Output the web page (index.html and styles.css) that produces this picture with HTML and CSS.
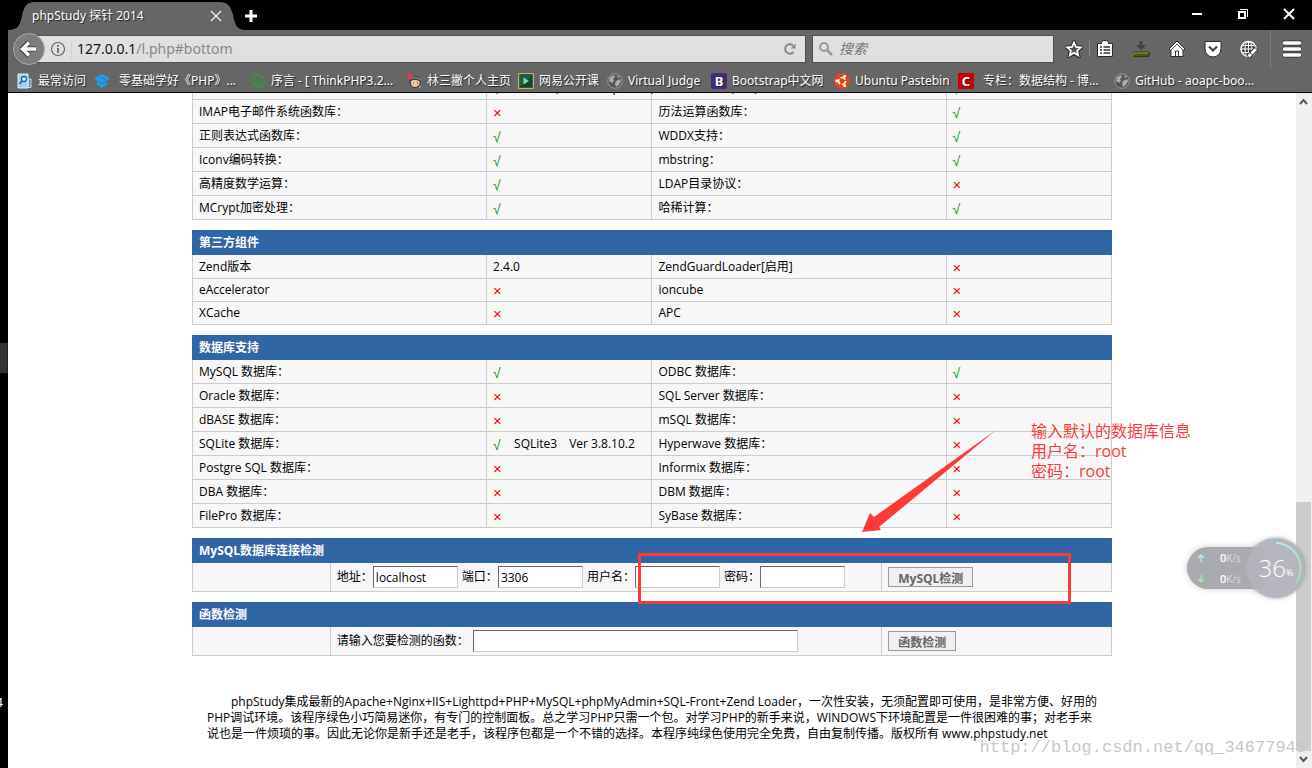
FILE: index.html
```html
<!DOCTYPE html>
<html lang="zh-CN">
<head>
<meta charset="utf-8">
<title>phpStudy 探针 2014</title>
<link rel="stylesheet" href="styles.css">
</head>
<body>
<div class="desktop-edge">
  <span class="edge-handle"></span>
  <span class="edge-text">4</span>
</div>
<div class="browser">
  <header class="chrome">
    <div class="titlebar">
      <div class="tab">
        <svg class="tab-shape" viewBox="0 0 238 30"><path fill="#666" d="M0 30C11 30 12 24 14 16C16 7 18 2 27 2H211C221 2 223 8 225 15C227 24 228 30 238 30Z"/></svg>
        <span class="tab-title">phpStudy 探针 2014</span>
        <button class="plain" aria-label="关闭标签页"><svg width="12" height="12" viewBox="0 0 12 12"><path d="M1 1L11 11M11 1L1 11" stroke="#eee" stroke-width="1.3"/></svg></button>
      </div>
      <button class="plain new-tab" aria-label="新标签页"><svg width="14" height="14" viewBox="0 0 14 14"><path d="M7 1V13M1 7H13" stroke="#fff" stroke-width="3"/></svg></button>
      <div class="window-buttons">
        <button class="plain" aria-label="最小化"><svg width="12" height="12" viewBox="0 0 12 12"><path d="M1 6H11" stroke="#fff" stroke-width="2"/></svg></button>
        <button class="plain" aria-label="还原"><svg width="12" height="12" viewBox="0 0 12 12" fill="none" stroke="#fff"><path d="M2 4H8V10H2Z" stroke-width="2"/><path d="M3 1.500H10.500V9" stroke-width="1"/></svg></button>
        <button class="plain" aria-label="关闭"><svg width="12" height="12" viewBox="0 0 12 12"><path d="M1 1L11 11M11 1L1 11" stroke="#fff" stroke-width="2"/></svg></button>
      </div>
    </div>
    <div class="navbar">
      <button class="back" aria-label="后退"><svg width="18" height="18" viewBox="0 0 18 18"><path d="M9 2L2 9L9 16M3 9H16" fill="none" stroke="#333" stroke-width="5"/><path d="M9 2.500L2.500 9L9 15.500M3 9H16" fill="none" stroke="#fff" stroke-width="3.400"/></svg></button>
      <div class="urlbar">
        <svg width="16" height="16" viewBox="0 0 16 16" fill="none" stroke="#666"><circle cx="8" cy="8" r="6.500" stroke-width="1.200"/><path d="M8 7V12M8 4V5.700" stroke-width="1.800"/></svg>
        <span class="url-rule"></span>
        <span class="url">127.0.0.1<span class="url-path">/l.php#bottom</span></span>
        <button class="plain reload" aria-label="重新载入"><svg width="14" height="14" viewBox="0 0 14 14"><path d="M10.500 10A4.700 4.700 0 1 1 10 3.500" fill="none" stroke="#888" stroke-width="2"/><path d="M7.500 6.500H12.500V1.500Z" fill="#888"/></svg></button>
      </div>
      <div class="searchbar">
        <svg width="16" height="16" viewBox="0 0 16 16" fill="none" stroke="#999"><circle cx="6" cy="6" r="4" stroke-width="2"/><path d="M9 9L14 14" stroke-width="2.600"/></svg>
        <input class="search-input" type="text" placeholder="搜索" aria-label="搜索">
      </div>
      <div class="tools">
        <button class="plain" aria-label="收藏"><svg width="18" height="18" viewBox="0 0 18 18"><path d="M9 2L11.200 6.800L16.300 7.300L12.500 10.800L13.600 16L9 13.300L4.400 16L5.500 10.800L1.700 7.300L6.800 6.800Z" fill="#555" stroke="#2b2b2b" stroke-width="3.600"/><path d="M9 2.500L11 7L15.800 7.500L12.200 10.700L13.200 15.300L9 12.800L4.800 15.300L5.800 10.700L2.200 7.500L7 7Z" fill="#555" stroke="#fff" stroke-width="1.800"/></svg></button>
        <span class="tool-rule"></span>
        <button class="plain" aria-label="书签"><svg width="18" height="18" viewBox="0 0 18 18"><path d="M1.500 3.500H5.500V2L7.500 .5H10.500L12.500 2V3.500H16.500V16.500H1.500Z" fill="#fff" stroke="#2b2b2b"/><path d="M4 7H6M7.500 7H14M4 10H6M7.500 10H14M4 13H6M7.500 13H14" stroke="#333" stroke-width="1.500"/></svg></button>
        <button class="plain" aria-label="下载"><svg width="18" height="18" viewBox="0 0 18 18"><path d="M7.500 1H10.500V5H14L9 10L4 5H7.500Z" fill="#444"/><rect x=".5" y="12" width="17" height="4.500" rx="1.500" fill="#555500" stroke="#333"/><path d="M1 16.500V13H16" fill="none" stroke="#8ca04a"/></svg></button>
        <button class="plain" aria-label="主页"><svg width="18" height="18" viewBox="0 0 18 18"><path d="M9 1L17 9L15.500 10.200H15V16.500H3V10.200H2.500L1 9Z" fill="#fff" stroke="#2b2b2b"/><path d="M3 10L9 4.200L15 10M7.500 16V11H10.500V16" fill="none" stroke="#333"/></svg></button>
        <button class="plain" aria-label="Pocket"><svg width="18" height="18" viewBox="0 0 18 18"><path d="M1 1.500H17V9A8 8 0 0 1 1 9Z" fill="#fff" stroke="#2b2b2b"/><path d="M5 6.500L9 10.500L13 6.500" fill="none" stroke="#444" stroke-width="2.200"/></svg></button>
        <button class="plain" aria-label="附加组件"><svg width="18" height="18" viewBox="0 0 18 18" fill="none"><circle cx="8.500" cy="9" r="7.500" fill="#444" stroke="#fff" stroke-width="1.500"/><ellipse cx="8.500" cy="9" rx="3.500" ry="7.500" stroke="#fff"/><path d="M1 9H16M2.500 5.500H14.500M2.500 12.500H14.500M8.500 1.500V16.500" stroke="#fff"/><path d="M8 17L16.500 8.500" stroke="#333" stroke-width="5"/><path d="M8.500 16.500L11 14M11.500 13.500L16 9" stroke="#fff" stroke-width="3"/></svg></button>
        <span class="menu-rule"></span>
        <button class="plain" aria-label="菜单"><svg width="18" height="18" viewBox="0 0 18 18"><path d="M1 3H17M1 9H17M1 15H17" stroke="#2b2b2b" stroke-width="5" stroke-linecap="round"/><path d="M1.500 3H16.500M1.500 9H16.500M1.500 15H16.500" stroke="#fff" stroke-width="3.400" stroke-linecap="round"/></svg></button>
      </div>
    </div>
    <nav class="bookmarks">
      <a href="#"><svg width="16" height="16" viewBox="0 0 16 16"><path d="M1 1H11V15H1Z" fill="#9fd0ec" stroke="#d7eefa"/><path d="M11.500 6H14V14.500H11.500Z" fill="#4d8fb8" stroke="#bfe0f3"/><circle cx="7" cy="6" r="2.500" fill="#d7eefa" stroke="#2b6288" stroke-width="1.300"/><path d="M5 8L2.500 11" stroke="#2b6288" stroke-width="1.800"/></svg><span>最常访问</span></a>
      <a href="#" class="spaced"><svg width="16" height="16" viewBox="0 0 16 16"><path d="M8 1L16 5.500L13 7.500V11.500L8 15L3 11.500V7.500L0 5.500Z" fill="#15a0f5"/><path d="M6 5.500H10L11 6.500M3.500 8L8 10.500L12.500 8" fill="none" stroke="#56707f" stroke-width="1.200"/></svg><span>零基础学好《PHP》...</span></a>
      <a href="#"><svg width="16" height="16" viewBox="0 0 16 16" fill="none" stroke="#2d9b38" stroke-width="1.500"><path d="M8 11H5A3.500 3.500 0 0 1 4 4.500A4.500 4.500 0 0 1 12.500 5A3 3 0 0 1 12 11H10L7 7.500M1 13.500Q5 11.500 8 13.500Q11 15 15 13"/></svg><span>序言 - [ ThinkPHP3.2...</span></a>
      <a href="#"><svg width="16" height="16" viewBox="0 0 16 16"><circle cx="9" cy="9" r="6" fill="#4a4543"/><path d="M5 8Q9 6 13.500 8.500V11Q12 14 9 14Q5.500 14 5 11Z" fill="#f0c7a5"/><path d="M3 6Q9 3 15 7" stroke="#999" fill="none"/><path d="M7 10H8M11 10H12" stroke="#333"/><path d="M3.500 6.500L.5 3Q0 0 2 .5L3.500 2L5 .5Q8 0 6.500 3Z" fill="#f0324b"/><circle cx="14" cy="14" r="1.200" fill="#5aa9db"/></svg><span>林三撇个人主页</span></a>
      <a href="#"><svg width="16" height="16" viewBox="0 0 16 16"><rect x=".5" y=".5" width="15" height="15" rx="1" fill="#17614a" stroke="#e8a64c" stroke-width="1.200"/><path d="M2 14L14 2V14Z" fill="#0f4436"/><path d="M5.500 4.500V11.500L11 8Z" fill="#8fd3a4"/></svg><span>网易公开课</span></a>
      <a href="#"><svg width="16" height="16" viewBox="0 0 16 16"><circle cx="8" cy="8" r="7.300" fill="#555" stroke="#999"/><path d="M3 4L7 2L8 4L6 6L7 8L5 10L2 8ZM9 8L13 6L14 8L12 12L9 14L8 11ZM10 2L13 4L11 5Z" fill="#aaa"/></svg><span>Virtual Judge</span></a>
      <a href="#"><span class="favicon purple">B</span><span>Bootstrap中文网</span></a>
      <a href="#"><svg width="16" height="16" viewBox="0 0 16 16"><circle cx="8" cy="8" r="8" fill="#dd4814"/><circle cx="8" cy="8" r="3.500" fill="none" stroke="#fff" stroke-width="1.700" stroke-dasharray="5.500 1.800"/><circle cx="2.800" cy="8" r="1.400" fill="#fff"/><circle cx="10.700" cy="3.300" r="1.400" fill="#fff"/><circle cx="10.700" cy="12.700" r="1.400" fill="#fff"/></svg><span>Ubuntu Pastebin</span></a>
      <a href="#" class="spaced"><span class="favicon red">C</span><span>专栏：数据结构 - 博...</span></a>
      <a href="#"><svg width="16" height="16" viewBox="0 0 16 16"><circle cx="8" cy="8" r="7.300" fill="#555" stroke="#999"/><path d="M3 4L7 2L8 4L6 6L7 8L5 10L2 8ZM9 8L13 6L14 8L12 12L9 14L8 11ZM10 2L13 4L11 5Z" fill="#aaa"/></svg><span>GitHub - aoapc-boo...</span></a>
    </nav>
  </header>
  <div class="viewport">
    <main class="page">
      <table class="info cut">
        <colgroup><col class="w32"><col class="w18"><col class="w32"><col class="w18"></colgroup>
        <tr><td>GD库支持：</td><td><span class="yes">√</span> bundled (2.1.0 compatible)</td><td>压缩文件支持(Zlib)：</td><td><span class="yes">√</span></td></tr>
        <tr><td>IMAP电子邮件系统函数库：</td><td><span class="no">×</span></td><td>历法运算函数库：</td><td><span class="yes">√</span></td></tr>
        <tr><td>正则表达式函数库：</td><td><span class="yes">√</span></td><td>WDDX支持：</td><td><span class="yes">√</span></td></tr>
        <tr><td>Iconv编码转换：</td><td><span class="yes">√</span></td><td>mbstring：</td><td><span class="yes">√</span></td></tr>
        <tr><td>高精度数学运算：</td><td><span class="yes">√</span></td><td>LDAP目录协议：</td><td><span class="no">×</span></td></tr>
        <tr><td>MCrypt加密处理：</td><td><span class="yes">√</span></td><td>哈稀计算：</td><td><span class="yes">√</span></td></tr>
      </table>
      <table class="info">
        <colgroup><col class="w32"><col class="w18"><col class="w32"><col class="w18"></colgroup>
        <tr><th colspan="4">第三方组件</th></tr>
        <tr><td>Zend版本</td><td>2.4.0</td><td>ZendGuardLoader[启用]</td><td><span class="no">×</span></td></tr>
        <tr class="short"><td>eAccelerator</td><td><span class="no">×</span></td><td>ioncube</td><td><span class="no">×</span></td></tr>
        <tr class="short"><td>XCache</td><td><span class="no">×</span></td><td>APC</td><td><span class="no">×</span></td></tr>
      </table>
      <table class="info">
        <colgroup><col class="w32"><col class="w18"><col class="w32"><col class="w18"></colgroup>
        <tr><th colspan="4">数据库支持</th></tr>
        <tr><td>MySQL 数据库：</td><td><span class="yes">√</span></td><td>ODBC 数据库：</td><td><span class="yes">√</span></td></tr>
        <tr><td>Oracle 数据库：</td><td><span class="no">×</span></td><td>SQL Server 数据库：</td><td><span class="no">×</span></td></tr>
        <tr><td>dBASE 数据库：</td><td><span class="no">×</span></td><td>mSQL 数据库：</td><td><span class="no">×</span></td></tr>
        <tr><td>SQLite 数据库：</td><td><span class="yes">√</span>&emsp;SQLite3&emsp;Ver 3.8.10.2</td><td>Hyperwave 数据库：</td><td><span class="no">×</span></td></tr>
        <tr><td>Postgre SQL 数据库：</td><td><span class="no">×</span></td><td>Informix 数据库：</td><td><span class="no">×</span></td></tr>
        <tr><td>DBA 数据库：</td><td><span class="no">×</span></td><td>DBM 数据库：</td><td><span class="no">×</span></td></tr>
        <tr><td>FilePro 数据库：</td><td><span class="no">×</span></td><td>SyBase 数据库：</td><td><span class="no">×</span></td></tr>
      </table>
      <form>
        <table class="info">
          <colgroup><col class="w15"><col class="w60"><col class="w25"></colgroup>
          <tr><th colspan="3">MySQL数据库连接检测</th></tr>
          <tr class="form-row"><td></td><td><div class="fields">
            <label for="host">地址：</label><input id="host" type="text" value="localhost">
            <label for="port">端口：</label><input id="port" type="text" value="3306">
            <label for="login">用户名：</label><input id="login" type="text">
            <label for="password">密码：</label><input id="password" type="password">
          </div></td><td><button class="check" type="button">MySQL检测</button></td></tr>
        </table>
        <table class="info">
          <colgroup><col class="w15"><col class="w60"><col class="w25"></colgroup>
          <tr><th colspan="3">函数检测</th></tr>
          <tr class="form-row"><td></td><td><div class="fields">
            <label for="func">请输入您要检测的函数：</label><input id="func" class="wide" type="text">
          </div></td><td><button class="check" type="button">函数检测</button></td></tr>
        </table>
      </form>
      <p class="about">phpStudy集成最新的Apache+Nginx+IIS+Lighttpd+PHP+MySQL+phpMyAdmin+SQL-Front+Zend Loader，一次性安装，无须配置即可使用，是非常方便、好用的<br>PHP调试环境。该程序绿色小巧简易迷你，有专门的控制面板。总之学习PHP只需一个包。对学习PHP的新手来说，WINDOWS下环境配置是一件很困难的事；对老手来<br>说也是一件烦琐的事。因此无论你是新手还是老手，该程序包都是一个不错的选择。本程序纯绿色使用完全免费，自由复制传播。版权所有 www.phpstudy.net</p>
      <div class="highlight"></div>
      <svg class="arrow" width="136" height="104" viewBox="0 0 136 104"><path d="M135 1L18 98L20 101L1 103L9 84L13 88Z" fill="#fc3b38"/></svg>
      <div class="note">输入默认的数据库信息<br>用户名：root<br>密码：root</div>
    </main>
    <div class="scrollbar">
      <svg width="15" height="17" viewBox="0 0 15 17"><path d="M4 11L7.500 7L11 11" fill="none" stroke="#555" stroke-width="2"/></svg>
      <span class="thumb"></span>
      <svg width="15" height="17" viewBox="0 0 15 17"><path d="M4 6L7.500 10L11 6" fill="none" stroke="#555" stroke-width="2"/></svg>
    </div>
    <div class="watermark">http://blog.csdn.net/qq_34677945</div>
    <div class="speed">
      <div class="rates">
        <div><svg width="8" height="8" viewBox="0 0 8 8"><path d="M4 8V1M1 4L4 1L7 4" fill="none" stroke="#b5e4fb" stroke-width="1.500"/></svg><b>0</b>K/s</div>
        <div><svg width="8" height="8" viewBox="0 0 8 8"><path d="M4 0V7M1 4L4 7L7 4" fill="none" stroke="#a5e2ac" stroke-width="1.500"/></svg><b>0</b>K/s</div>
      </div>
      <div class="gauge">
        <svg class="ring" width="60" height="60" viewBox="0 0 60 60"><defs><linearGradient id="ring" x1="0" y1="0" x2="0" y2="1"><stop offset="0" stop-color="#a8f0ea"/><stop offset="1" stop-color="#a5dca8"/></linearGradient></defs><path d="M30 5A25.500 25.500 0 0 1 50 45" fill="none" stroke="url(#ring)" stroke-width="1.800"/></svg>
        <span>36</span><small>%</small>
      </div>
    </div>
  </div>
</div>
</body>
</html>
```

FILE: styles.css
```css
* { box-sizing: border-box; }

body {
  margin: 0;
  height: 100vh;
  display: flex;
  overflow: hidden;
  background: #000;
  color: #000;
  font: 12px/16px "Noto Sans", "Noto Sans CJK SC", sans-serif;
}

button, input { font: inherit; }
svg { display: block; flex: none; }

.plain {
  border: 0;
  padding: 0;
  background: none;
  display: flex;
}

/* strip of desktop left of the window */
.desktop-edge {
  flex: none;
  width: 8px;
  overflow: hidden;
  display: flex;
  flex-direction: column;
  padding-top: 343px;
}
.edge-handle { height: 30px; background: #333; border-right: 1px solid #222; }
.edge-text { margin-top: 322px; margin-left: -4px; color: #fff; }

.browser {
  flex: 1;
  min-width: 0;
  display: flex;
  flex-direction: column;
}

.chrome { background: #666; border-bottom: 1px solid #000; color: #fff; }

.titlebar { height: 30px; background: #000; display: flex; align-items: center; }
.tab {
  position: relative;
  width: 238px;
  height: 30px;
  padding: 2px 24px 0 24px;
  display: flex;
  align-items: center;
  justify-content: space-between;
}
.tab-shape { position: absolute; left: 0; top: 0; width: 100%; height: 100%; }
.tab-title { position: relative; text-shadow: 1px 1px 1px #222; }
.tab .plain { position: relative; }
.new-tab { margin: 2px 0 0 -2px; }
.window-buttons { margin-left: auto; padding: 0 17px 2px 0; display: flex; gap: 34px; }

.navbar { height: 38px; padding-left: 5px; display: flex; align-items: center; }
.back {
  position: relative;
  width: 32px;
  height: 32px;
  padding: 0;
  border: 1px solid #aaa;
  border-radius: 50%;
  background: #7d7d7d;
  display: flex;
  align-items: center;
  justify-content: center;
}
.urlbar, .searchbar {
  height: 28px;
  border: 1px solid #505050;
  background: #e0e0e0;
  display: flex;
  align-items: center;
}
.urlbar { flex: 1; margin-left: -8px; padding: 0 8px 0 12px; }
.url-rule { width: 1px; height: 20px; margin: 0 5px; background: #d2d2d2; }
.url { color: #111; font-size: 14px; }
.url-path { color: #888; }
.reload { margin-left: auto; }
.searchbar { width: 242px; margin-left: 6px; padding: 0 5px; gap: 5px; }
.search-input {
  min-width: 0;
  flex: 1;
  border: 0;
  padding: 0;
  background: none;
  outline: 0;
  font-size: 14px;
}
.search-input::placeholder { color: #777; font-style: italic; }
.tools { padding: 0 11px; display: flex; align-items: center; gap: 18px; }
.tool-rule { width: 1px; height: 16px; margin: 0 -12px; background: #888; }
.menu-rule { width: 1px; height: 38px; margin: 0 -6px; background: #7c7c7c; }

.bookmarks {
  height: 24px;
  padding: 1px 0 0 9px;
  display: grid;
  grid-template-columns: 77px 156px 156px 112px 89px 104px 123px 124px 156px auto;
  align-items: center;
}
.bookmarks a {
  display: flex;
  align-items: center;
  gap: 5px;
  color: #fff;
  text-decoration: none;
  white-space: nowrap;
  text-shadow: 1px 1px 1px #222;
}
.bookmarks .spaced { gap: 9px; }
.favicon { width: 16px; height: 16px; text-align: center; font-weight: bold; font-size: 13px; }
.purple { background: #452b74; border-radius: 2px; }
.red { background: #c9000b; }

.viewport {
  position: relative;
  flex: 1;
  min-height: 0;
  display: flex;
  overflow: hidden;
  background: #fff;
  font-family: "Open Sans", "Noto Sans CJK SC", sans-serif;
}
.page { position: relative; width: 920px; margin: 0 auto; }

.info {
  width: 100%;
  margin-bottom: 10px;
  border-collapse: collapse;
  table-layout: fixed;
  background: #f7f7f7;
}
.cut { margin-top: -18px; }
.w32 { width: 32%; }
.w18 { width: 18%; }
.w15 { width: 15%; }
.w60 { width: 60%; }
.w25 { width: 25%; }
.info tr { height: 24px; }
.info .short { height: 23px; }
.info .form-row { height: 29px; }
.info td { border: 1px solid #ccc; padding: 0 6px; white-space: nowrap; }
.info th {
  border: 1px solid #3066a6;
  padding: 0 6px;
  background: #3066a6;
  color: #fff;
  text-align: left;
}
.yes, .no {
  display: inline-block;
  height: 16px;
  padding-top: 1px;
  vertical-align: top;
  font-family: "Liberation Sans", sans-serif;
}
.yes { width: 9px; color: #090; font-size: 14px; }
.no { color: #f00; font-size: 15px; }

.fields { display: flex; align-items: center; }
.fields input {
  width: 85px;
  height: 22px;
  margin-right: 4px;
  padding: 0 2px;
  border: 1px solid;
  border-color: #666 #ccc #ccc #666;
  background: #fff;
}
.fields .wide { width: 325px; margin-left: 4px; }
.check {
  height: 20px;
  padding: 4px 9px 0;
  border: 1px solid #999;
  background: #f0f0f0;
  color: #666;
  font-weight: bold;
  line-height: 14px;
  display: block;
}

.about { margin: 38px 0 0; padding: 0 15px; text-indent: 24px; white-space: nowrap; }

/* annotations laid over the page */
.highlight {
  position: absolute;
  left: 446px;
  top: 460px;
  width: 433px;
  height: 51px;
  border: 3px solid #fc3b38;
}
.arrow { position: absolute; left: 669px; top: 336px; }
.note {
  position: absolute;
  left: 839px;
  top: 328px;
  color: #fc3b38;
  font-size: 16px;
  line-height: 20px;
  white-space: nowrap;
}

.scrollbar {
  flex: none;
  width: 16px;
  padding-right: 1px;
  background: #f0f0f0;
  display: flex;
  flex-direction: column;
}
.thumb { height: 249px; margin-top: auto; background: #cdcdcd; }

.watermark {
  position: absolute;
  right: 6px;
  bottom: 10px;
  color: #c8c8c8;
  font: 17px/20px "Liberation Mono", monospace;
}

.speed {
  position: absolute;
  right: 6px;
  top: 445px;
  display: flex;
  align-items: center;
  color: #fff;
}
.rates {
  width: 76px;
  height: 42px;
  margin-right: -17px;
  padding-left: 10px;
  border-radius: 21px 0 0 21px;
  background: #aaabae;
  box-shadow: 0 0 6px #ccc;
  display: flex;
  flex-direction: column;
  justify-content: space-around;
  font-size: 10px;
  color: #ddd;
}
.rates div { display: flex; align-items: center; }
.rates b { margin-left: 15px; color: #fff; font-size: 11px; font-weight: 600; }
.gauge {
  position: relative;
  width: 60px;
  height: 60px;
  border-radius: 50%;
  background: rgba(178, 179, 187, .95);
  box-shadow: 0 0 4px #aaa;
  display: flex;
  align-items: center;
  justify-content: center;
}
.gauge span { font: 24px/30px "Open Sans", sans-serif; font-weight: 300; }
.gauge small { margin-top: 10px; font-size: 9px; }
.ring { position: absolute; left: 0; top: 0; }
```
